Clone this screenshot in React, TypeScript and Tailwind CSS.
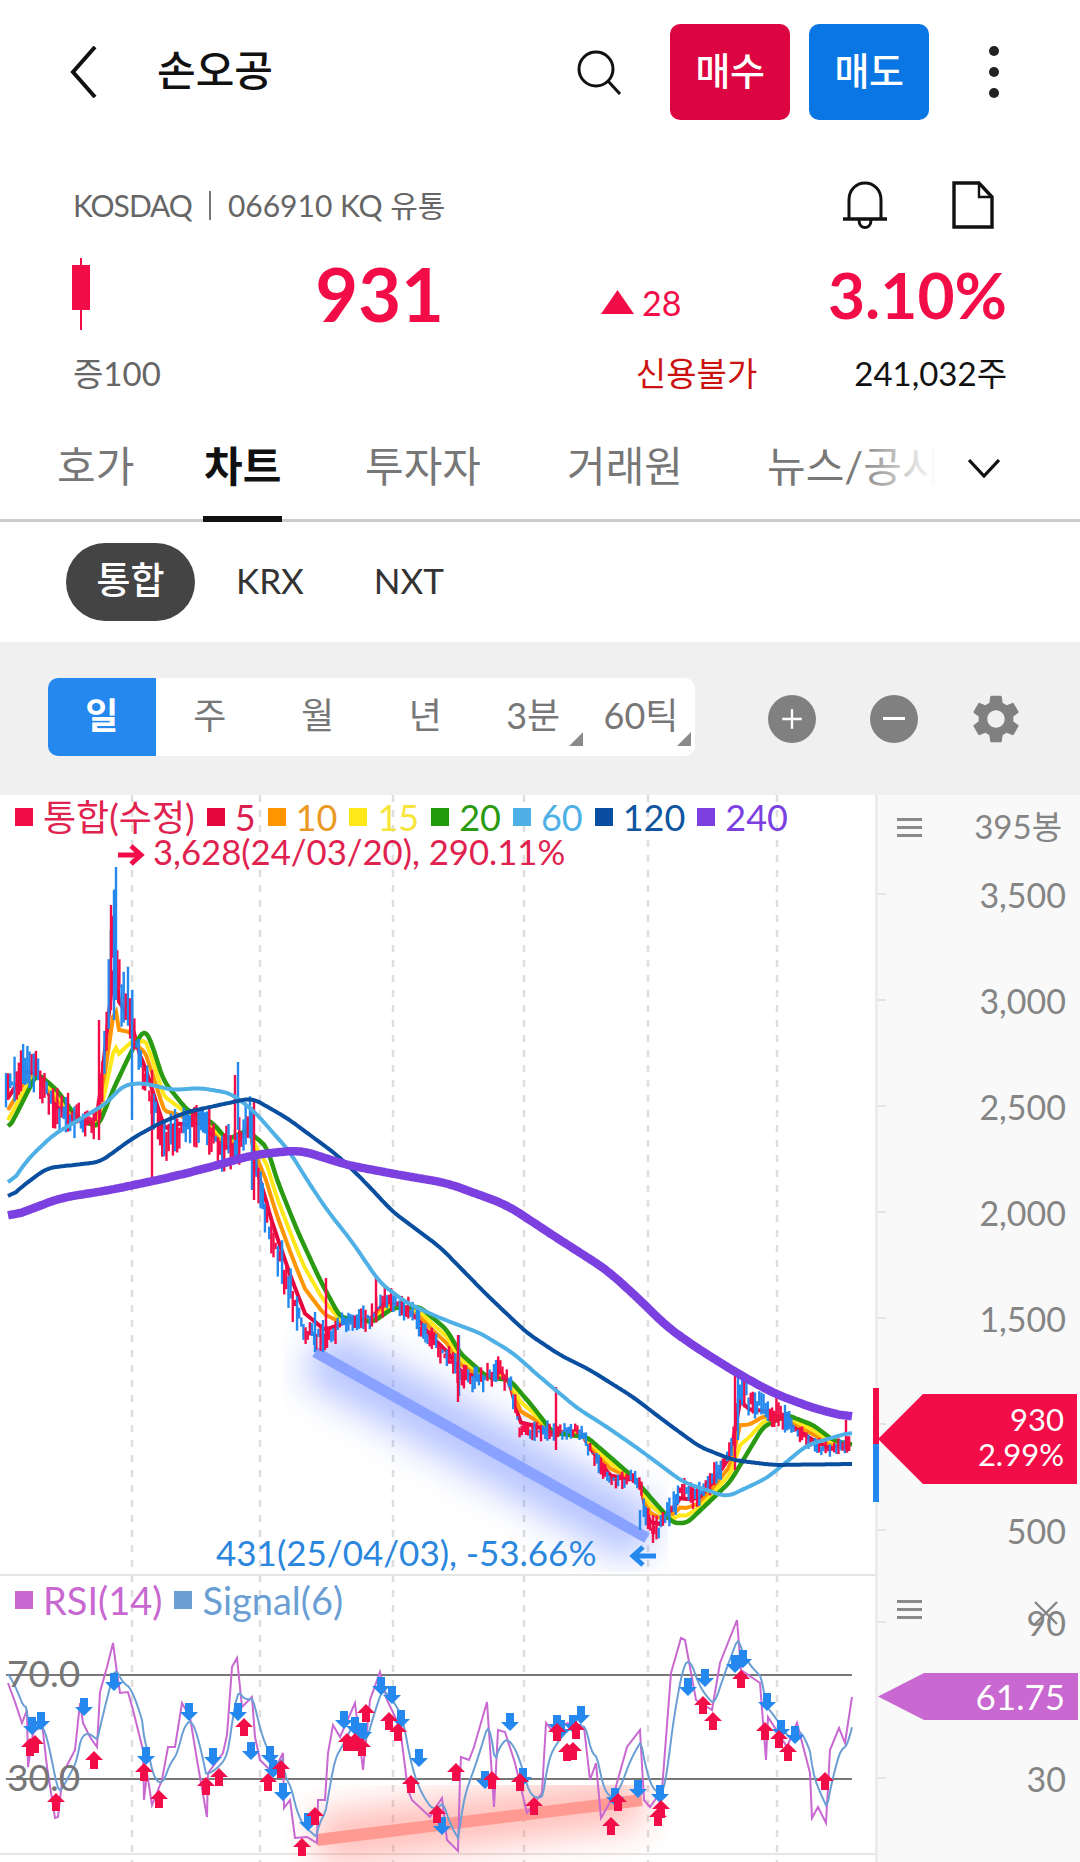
import { MdSettings } from 'react-icons/md'

type Pt = [number, number]

const RED = '#f20d48'
const BLUE = '#2488ee'

function interp(pts: Pt[], x: number) {
  if (x <= pts[0][0]) return pts[0][1]
  for (let i = 1; i < pts.length; i++) {
    if (x <= pts[i][0]) {
      const [x0, y0] = pts[i - 1]
      const [x1, y1] = pts[i]
      return y0 + ((y1 - y0) * (x - x0)) / (x1 - x0)
    }
  }
  return pts[pts.length - 1][1]
}

const toPath = (pts: Pt[]) => pts.map((p) => `${p[0].toFixed(1)},${p[1].toFixed(1)}`).join(' ')

const rand = (i: number) => {
  const v = Math.sin(i * 127.1 + 11.7) * 43758.5453
  return v - Math.floor(v)
}

// rounds off the corners of the hand-read curves
const smooth = (pts: Pt[], win = 8): Pt[] => {
  const out: Pt[] = []
  const start = pts[0][0]
  const end = pts[pts.length - 1][0]
  for (let x = start; x <= end; x += 2) {
    let sum = 0
    let n = 0
    for (let d = -win; d <= win; d += 2) {
      if (x + d < start || x + d > end) continue
      sum += interp(pts, x + d)
      n++
    }
    out.push([x, sum / n])
  }
  return out
}

const ma240: Pt[] = [[8, 1218], [60, 1198], [110, 1190], [167, 1178], [207, 1168], [253, 1155], [300, 1150], [347, 1165], [400, 1175], [447, 1183], [507, 1205], [557, 1238], [607, 1270], [640, 1300], [667, 1327], [700, 1350], [737, 1373], [773, 1393], [813, 1408], [852, 1418]]
const ma120: Pt[] = [[8, 1200], [20, 1188], [47, 1168], [100, 1162], [133, 1138], [160, 1123], [187, 1112], [233, 1102], [252, 1098], [287, 1118], [337, 1155], [363, 1180], [393, 1212], [440, 1247], [487, 1295], [527, 1333], [560, 1355], [590, 1370], [633, 1397], [667, 1423], [700, 1447], [733, 1460], [773, 1465], [852, 1464]]
const ma60: Pt[] = [[8, 1188], [27, 1160], [53, 1135], [87, 1115], [107, 1103], [123, 1085], [143, 1083], [173, 1090], [200, 1088], [230, 1093], [253, 1110], [290, 1152], [307, 1180], [327, 1210], [353, 1243], [380, 1283], [407, 1303], [440, 1318], [480, 1333], [513, 1353], [540, 1377], [577, 1408], [607, 1427], [640, 1450], [683, 1482], [727, 1497], [767, 1478], [807, 1445], [852, 1432]]
const ma20: Pt[] = [[8, 1130], [20, 1107], [37, 1073], [57, 1090], [77, 1118], [98, 1127], [113, 1090], [132, 1050], [145, 1028], [153, 1047], [163, 1080], [187, 1110], [213, 1123], [227, 1140], [247, 1130], [267, 1147], [277, 1180], [297, 1230], [320, 1280], [340, 1317], [373, 1322], [393, 1308], [420, 1307], [447, 1330], [460, 1353], [487, 1377], [510, 1380], [533, 1407], [553, 1433], [587, 1437], [610, 1457], [633, 1477], [650, 1497], [673, 1523], [687, 1523], [730, 1482], [763, 1427], [787, 1415], [813, 1425], [833, 1440], [852, 1445]]
const closes: Pt[] = [[8, 1090], [25, 1065], [40, 1078], [55, 1110], [75, 1120], [95, 1125], [100, 1090], [110, 980], [115, 920], [118, 980], [130, 1010], [140, 1060], [155, 1110], [165, 1140], [178, 1130], [200, 1125], [225, 1150], [240, 1140], [250, 1120], [255, 1170], [270, 1230], [290, 1290], [305, 1330], [325, 1340], [345, 1322], [370, 1318], [385, 1300], [410, 1310], [430, 1340], [450, 1360], [460, 1375], [480, 1380], [500, 1370], [510, 1385], [520, 1430], [535, 1430], [555, 1432], [580, 1430], [590, 1450], [610, 1480], [640, 1480], [645, 1510], [650, 1528], [660, 1528], [668, 1515], [680, 1492], [700, 1495], [713, 1478], [730, 1450], [735, 1420], [740, 1385], [750, 1400], [770, 1410], [790, 1425], [810, 1442], [827, 1450], [852, 1443]]

const blend = (t: number): Pt[] => {
  const out: Pt[] = []
  for (let x = 8; x <= 852; x += 3) {
    const c = interp(closes, x)
    out.push([x, c + (interp(ma20, x) - c) * t])
  }
  return out
}

const ampAt = (x: number) => {
  if (x < 100) return 24
  if (x < 135) return 40
  if (x < 300) return 26
  if (x < 520) return 15
  if (x < 640) return 11
  if (x < 730) return 15
  if (x < 790) return 18
  return 9
}

const candles = Array.from({ length: 395 }, (_, i) => {
  const x = 6 + i * 2.14
  const y = interp(closes, x)
  const a = ampAt(x)
  return { x, y1: y - a * rand(i), y2: y + a * rand(i + 500), red: rand(i + 900) > 0.55 }
})

const wicks: [number, number, number, string][] = [
  [111, 905, 1010, RED], [116, 867, 1000, BLUE], [114, 890, 1020, BLUE], [99, 1020, 1140, RED], [132, 1000, 1120, BLUE],
  [152, 1070, 1185, RED], [238, 1062, 1130, BLUE], [235, 1075, 1140, RED], [252, 1107, 1190, BLUE], [254, 1100, 1200, RED],
  [315, 1312, 1352, BLUE], [323, 1320, 1352, BLUE], [326, 1278, 1345, RED], [376, 1278, 1320, RED], [459, 1335, 1396, BLUE], [458, 1335, 1402, RED],
  [556, 1387, 1450, RED], [640, 1510, 1530, BLUE], [653, 1515, 1543, RED], [738, 1370, 1440, BLUE], [735, 1375, 1470, RED], [846, 1420, 1450, RED],
]

const rsi: Pt[] = [[8, 1683], [15, 1702], [22, 1723], [27, 1710], [28, 1767], [33, 1733], [42, 1723], [47, 1767], [55, 1818], [58, 1817], [63, 1773], [75, 1750], [80, 1703], [83, 1723], [90, 1737], [97, 1747], [100, 1692], [107, 1667], [113, 1643], [117, 1673], [120, 1693], [128, 1692], [133, 1710], [143, 1750], [144, 1800], [147, 1773], [152, 1805], [162, 1780], [168, 1747], [175, 1747], [182, 1703], [190, 1717], [197, 1760], [207, 1817], [208, 1773], [223, 1753], [227, 1735], [232, 1667], [237, 1658], [242, 1707], [252, 1697], [255, 1737], [260, 1760], [273, 1773], [283, 1753], [284, 1808], [290, 1800], [295, 1838], [307, 1837], [317, 1843], [318, 1800], [325, 1800], [328, 1753], [333, 1725], [340, 1737], [355, 1703], [363, 1770], [370, 1700], [380, 1672], [387, 1700], [400, 1727], [408, 1790], [412, 1800], [430, 1817], [436, 1807], [442, 1798], [447, 1840], [458, 1851], [460, 1777], [461, 1757], [469, 1760], [474, 1747], [487, 1702], [494, 1807], [498, 1730], [505, 1732], [515, 1763], [527, 1813], [542, 1793], [546, 1723], [554, 1733], [567, 1723], [584, 1727], [590, 1780], [596, 1763], [601, 1818], [613, 1797], [627, 1747], [640, 1730], [644, 1800], [650, 1807], [662, 1790], [671, 1673], [681, 1638], [685, 1640], [696, 1700], [712, 1710], [720, 1663], [737, 1620], [741, 1670], [760, 1683], [766, 1760], [768, 1717], [787, 1747], [797, 1723], [810, 1773], [812, 1818], [818, 1807], [826, 1823], [830, 1750], [839, 1728], [845, 1743], [852, 1697]]

const signal: Pt[] = (() => {
  const out: Pt[] = []
  let v = 1672
  for (let x = 8; x <= 852; x += 2) {
    v += (interp(rsi, x) - v) * 0.2
    out.push([x, v])
  }
  return out
})()

const ups: Pt[] = [[30, 1738], [35, 1735], [56, 1793], [94, 1751], [144, 1763], [159, 1790], [206, 1777], [219, 1768], [244, 1718], [268, 1773], [281, 1760], [302, 1838], [315, 1807], [347, 1733], [355, 1733], [362, 1738], [366, 1704], [389, 1712], [398, 1723], [411, 1775], [437, 1805], [456, 1763], [492, 1771], [520, 1773], [534, 1797], [557, 1723], [567, 1743], [573, 1742], [576, 1721], [611, 1817], [618, 1793], [658, 1808], [661, 1800], [703, 1696], [713, 1712], [741, 1670], [765, 1722], [779, 1730], [788, 1743], [825, 1772]]
const downs: Pt[] = [[32, 1717], [41, 1712], [84, 1698], [114, 1673], [146, 1747], [189, 1703], [213, 1748], [238, 1703], [251, 1742], [270, 1746], [273, 1760], [283, 1783], [308, 1813], [344, 1711], [355, 1717], [363, 1723], [381, 1677], [392, 1686], [401, 1710], [419, 1749], [442, 1817], [485, 1771], [510, 1713], [523, 1768], [557, 1715], [561, 1720], [573, 1715], [581, 1706], [615, 1788], [638, 1780], [660, 1785], [688, 1678], [705, 1669], [735, 1655], [743, 1650], [767, 1693], [781, 1720], [795, 1726]]

const gridX = [132, 260, 393, 524, 648, 777]

function ChartCanvas() {
  return (
    <svg viewBox="0 795 875 1067" className="block w-[875px] h-[1067px]">
      <defs>
        <filter id="soft" x="-30%" y="-60%" width="160%" height="220%">
          <feGaussianBlur stdDeviation="18" />
        </filter>
        <clipPath id="blueClip"><rect x="283" y="1320" width="385" height="252" /></clipPath>
        <clipPath id="redClip"><rect x="285" y="1785" width="384" height="77" /></clipPath>
      </defs>

      {gridX.map((x) => (
        <line key={x} x1={x} x2={x} y1={795} y2={1862} stroke="#dedede" strokeWidth="2.5" strokeDasharray="7 8" />
      ))}

      <g clipPath="url(#blueClip)">
        <line x1={315} y1={1352} x2={647} y2={1538} stroke="#5f7dff" strokeWidth="60" opacity="0.45" filter="url(#soft)" />
      </g>
      <line x1={315} y1={1352} x2={647} y2={1538} stroke="#8aa2ff" strokeWidth="11" />

      <polyline points={toPath(blend(0.2))} fill="none" stroke="#e5063e" strokeWidth="4" />
      <polyline points={toPath(blend(0.5))} fill="none" stroke="#ff9500" strokeWidth="4" />
      <polyline points={toPath(blend(0.75))} fill="none" stroke="#ffe81a" strokeWidth="4" />
      <polyline points={toPath(smooth(ma20, 4))} fill="none" stroke="#2a9a10" strokeWidth="4.5" strokeLinejoin="round" />
      {candles.map((c, i) => (
        <line key={i} x1={c.x} x2={c.x} y1={c.y1} y2={c.y2} stroke={c.red ? RED : BLUE} strokeWidth="2.4" />
      ))}
      {wicks.map(([x, a, b, col], i) => (
        <line key={i} x1={x} x2={x} y1={a} y2={b} stroke={col} strokeWidth="2.4" />
      ))}
      <polyline points={toPath(smooth(ma60))} fill="none" stroke="#4fb0e5" strokeWidth="4" strokeLinejoin="round" />
      <polyline points={toPath(smooth(ma120))} fill="none" stroke="#0a4ea0" strokeWidth="4" strokeLinejoin="round" />
      <polyline points={toPath(smooth(ma240, 14))} fill="none" stroke="#7c3fe0" strokeWidth="8.5" strokeLinejoin="round" />

      <path d="M118 855h22M131 846l10 9-10 9" fill="none" stroke={RED} strokeWidth="5" />
      <path d="M656 1556h-22M643 1547l-10 9 10 9" fill="none" stroke={BLUE} strokeWidth="5" />

      <line x1={0} x2={875} y1={1575} y2={1575} stroke="#e5e5e5" strokeWidth="2" />
      <line x1={0} x2={875} y1={1854} y2={1854} stroke="#e5e5e5" strokeWidth="2" />

      <g clipPath="url(#redClip)">
        <line x1={317} y1={1840} x2={642} y2={1800} stroke="#ff6a5e" strokeWidth="50" opacity="0.45" filter="url(#soft)" />
      </g>
      <line x1={317} y1={1840} x2={642} y2={1800} stroke="#ff9a92" strokeWidth="12" />

      <line x1={6} x2={852} y1={1675} y2={1675} stroke="#777" strokeWidth="2" />
      <line x1={6} x2={852} y1={1779} y2={1779} stroke="#777" strokeWidth="2" />

      <polyline points={toPath(rsi)} fill="none" stroke="#c868d0" strokeWidth="2" />
      <polyline points={toPath(signal)} fill="none" stroke="#6b9fd4" strokeWidth="2" />

      {downs.map(([x, y], i) => (
        <path key={i} d={`M${x - 4} ${y}h8v9h5l-9 9-9-9h5z`} fill={BLUE} />
      ))}
      {ups.map(([x, y], i) => (
        <path key={i} d={`M${x} ${y}l9 9h-5v9h-8v-9h-5z`} fill={RED} />
      ))}
    </svg>
  )
}

const legend = [
  { sq: '#f20d48', label: '통합(수정)', text: 'text-[#e0224f]' },
  { sq: '#e5063e', label: '5', text: 'text-[#d92050]' },
  { sq: '#ff9500', label: '10', text: 'text-[#ea9a24]' },
  { sq: '#ffe81a', label: '15', text: 'text-[#f7e53c]' },
  { sq: '#229a0e', label: '20', text: 'text-[#2a9a10]' },
  { sq: '#4fb0e5', label: '60', text: 'text-[#4fb0e5]' },
  { sq: '#0a4ea0', label: '120', text: 'text-[#0f559f]' },
  { sq: '#7c3fe0', label: '240', text: 'text-[#7c3fe0]' },
]

const Burger = () => (
  <div className="flex flex-col gap-[5px] w-[25px]">
    <span className="h-[3px] bg-[#8a8a8a]" />
    <span className="h-[3px] bg-[#8a8a8a]" />
    <span className="h-[3px] bg-[#8a8a8a]" />
  </div>
)

const AxisRow = ({ label, h }: { label: string; h: string }) => (
  <div className={`flex items-center justify-between pr-[14px] ${h}`}>
    <span className="w-[8px] h-[2px] bg-[#e4e4e4]" />
    <span className="text-[34px] text-[#858585]">{label}</span>
  </div>
)

export default function App() {
  return (
    <div className="relative w-[1080px] h-[1862px] overflow-hidden bg-white [font-family:Lato,'Noto_Sans_CJK_KR',sans-serif]">
      {/* Top bar */}
      <div className="flex items-center h-[144px] pl-[70px]">
        <svg viewBox="0 0 27 52" className="w-[27px] h-[52px]" fill="none" stroke="#111" strokeWidth="4">
          <path d="M25 1L3 26l22 25" />
        </svg>
        <span className="ml-[60px] w-[419px] text-[42px] font-medium text-[#111] -mt-[3px]">손오공</span>
        <svg viewBox="0 0 46 46" className="w-[46px] h-[46px]" fill="none" stroke="#111" strokeWidth="3">
          <circle cx="20" cy="20" r="17" />
          <path d="M32 32l12 13" />
        </svg>
        <button className="ml-[48px] w-[120px] h-[96px] rounded-[10px] bg-[#dc0541] text-white text-[38px] font-medium -tracking-[0.5px] pb-[4px]">매수</button>
        <button className="ml-[19px] w-[120px] h-[96px] rounded-[10px] bg-[#0a76e3] text-white text-[38px] font-medium -tracking-[0.5px] pb-[4px]">매도</button>
        <div className="ml-[60px] flex flex-col gap-[11px]">
          <span className="w-[10px] h-[10px] rounded-full bg-[#222]" />
          <span className="w-[10px] h-[10px] rounded-full bg-[#222]" />
          <span className="w-[10px] h-[10px] rounded-full bg-[#222]" />
        </div>
      </div>

      {/* Stock info */}
      <div className="mt-[31px] flex items-center h-[60px] pl-[73px] pr-[86px]">
        <span className="text-[30px] text-[#666] -tracking-[1px]">KOSDAQ</span>
        <span className="mx-[17px] w-[2px] h-[29px] bg-[#777]" />
        <span className="text-[30px] text-[#666]">066910 KQ 유통</span>
        <svg viewBox="0 0 46 48" className="ml-auto w-[46px] h-[48px]" fill="none" stroke="#111" strokeWidth="3">
          <path d="M7 38V19C7 9 14 2 23 2s16 7 16 17v19" />
          <path d="M1 38h44" strokeWidth="3.4" />
          <path d="M17 39c0 10 12 10 12 0" />
        </svg>
        <svg viewBox="0 0 42 48" className="ml-[64px] w-[42px] h-[48px]" fill="none" stroke="#111" strokeWidth="3.4">
          <path d="M2 2h25l13 14v30H2z" />
          <path d="M27 2v14h13" strokeWidth="2.4" />
        </svg>
      </div>

      <div className="flex items-center h-[110px] pl-[72px] pr-[73px]">
        <div className="flex items-center justify-between w-[372px] mt-[8px]">
          <div className="relative w-[18px] h-[72px] -mt-[1px]">
            <span className="absolute left-[8px] top-0 w-[2px] h-[72px] bg-[#f20d48]" />
            <span className="absolute left-0 top-[7px] w-[18px] h-[45px] bg-[#f20d48]" />
          </div>
          <span className="text-[74px] leading-none font-bold text-[#f20d48]">931</span>
        </div>
        <div className="ml-[157px] flex items-center gap-[8px] mt-[24px]">
          <span className="w-[33px] h-[24px] bg-[#f20d48] [clip-path:polygon(50%_0,100%_100%,0_100%)]" />
          <span className="text-[34px] text-[#f20d48]">28</span>
        </div>
        <span className="ml-auto text-[64px] leading-none font-bold text-[#f20d48] mt-[10px]">3.10%</span>
      </div>

      <div className="flex items-center h-[60px] pl-[73px] pr-[73px] pb-[2px] text-[33px]">
        <span className="text-[#666]">증100</span>
        <span className="ml-auto text-[#cc1111]">신용불가</span>
        <span className="ml-[97px] text-[#111]">241,032주</span>
      </div>

      {/* Tabs */}
      <div className="relative flex items-center h-[117px] pt-[8px] border-b-[3px] border-[#cccccc] pl-[57px] text-[42px] text-[#777]">
        <span className="w-[78px]">호가</span>
        <span className="ml-[69px] w-[78px] font-bold text-[#111]">차트</span>
        <span className="ml-[83px] w-[118px]">투자자</span>
        <span className="ml-[84px] w-[116px]">거래원</span>
        <span className="ml-[84px] whitespace-nowrap">뉴스/공시</span>
        <span className="absolute left-[850px] top-0 w-[86px] h-[110px] bg-gradient-to-r from-white/0 to-white" />
        <span className="absolute left-[936px] top-0 w-[30px] h-[110px] bg-white" />
        <svg viewBox="0 0 32 19" className="absolute left-[968px] top-[54px] w-[32px] h-[19px]" fill="none" stroke="#111" strokeWidth="3.2">
          <path d="M1 1l15 16L31 1" />
        </svg>
        <span className="absolute left-[203px] -bottom-[3px] w-[79px] h-[6px] bg-[#111]" />
      </div>

      {/* Market pills */}
      <div className="flex items-center h-[120px] pl-[66px] text-[35px] text-[#333]">
        <span className="flex items-center justify-center w-[129px] h-[78px] rounded-[39px] bg-[#444] text-white text-[37px] font-medium pb-[5px]">통합</span>
        <span className="ml-[41px] pb-[4px]">KRX</span>
        <span className="ml-[70px] pb-[4px]">NXT</span>
      </div>

      {/* Period toolbar */}
      <div className="flex items-center h-[153px] pl-[48px] bg-[#f0f0f0]">
        <div className="flex w-[647px] h-[78px] rounded-[10px] bg-white text-[36px] text-[#777] overflow-hidden mb-[3px]">
          <span className="flex items-center justify-center w-[108px] bg-[#2488ee] text-white font-bold pb-[4px]">일</span>
          {['주', '월', '년', '3분', '60틱'].map((t, i) => (
            <span key={t} className="relative flex items-center justify-center w-[108px] pb-[4px]">
              {t}
              {i > 2 && (
                <span className="absolute right-[4px] bottom-[10px] w-[14px] h-[14px] bg-[#8a8a8a] [clip-path:polygon(100%_0,100%_100%,0_100%)]" />
              )}
            </span>
          ))}
        </div>
        <span className="ml-[73px] flex items-center justify-center w-[48px] h-[48px] rounded-full bg-[#808080]">
          <svg viewBox="0 0 24 24" className="w-[26px] h-[26px]" stroke="#fff" strokeWidth="2.2"><path d="M12 3v18M3 12h18" /></svg>
        </span>
        <span className="ml-[54px] flex items-center justify-center w-[48px] h-[48px] rounded-full bg-[#808080]">
          <span className="w-[22px] h-[3px] bg-white" />
        </span>
        <MdSettings size={58} className="ml-[49px] text-[#808080]" />
      </div>

      {/* Chart */}
      <div className="relative flex h-[1067px]">
        <div className="w-[875px] shrink-0">
          <ChartCanvas />
        </div>
        <div className="flex-1 bg-[#f9f9f9] border-l-[3px] border-[#ececec]">
          <div className="flex items-center justify-between h-[46px] pl-[19px] pr-[18px] pt-[18px] text-[33px] text-[#858585]">
            <Burger />
            <span>395봉</span>
          </div>
          <AxisRow label="3,500" h="h-[106px]" />
          <AxisRow label="3,000" h="h-[106px]" />
          <AxisRow label="2,500" h="h-[106px]" />
          <AxisRow label="2,000" h="h-[106px]" />
          <AxisRow label="1,500" h="h-[106px]" />
          <AxisRow label="1,000" h="h-[106px]" />
          <AxisRow label="500" h="h-[106px]" />
          <div className="relative">
            <AxisRow label="90" h="h-[78px]" />
            <div className="absolute left-[19px] top-[17px]">
              <Burger />
            </div>
            <svg viewBox="0 0 26 26" className="absolute left-[155px] top-[17px] w-[26px] h-[26px]" stroke="#858585" strokeWidth="2.4"><path d="M2 2l22 22M24 2L2 24" /></svg>
          </div>
          <div className="h-[78px]" />
          <AxisRow label="30" h="h-[78px]" />
        </div>

        {/* Legend, over the chart */}
        <div className="absolute left-[15px] -top-[1px] flex items-center h-[46px] text-[36px] whitespace-nowrap">
          {legend.map((l) => (
            <span key={l.label} className={`flex items-center gap-[10px] mr-[12px] ${l.text}`}>
              <svg viewBox="0 0 18 18" className="w-[18px] h-[18px]"><rect width="18" height="18" fill={l.sq} /></svg>
              {l.label}
            </span>
          ))}
        </div>
        <span className="absolute left-[153px] top-[35px] text-[34.7px] leading-[44px] text-[#e0224f] whitespace-nowrap">3,628(24/03/20), 290.11%</span>
        <span className="absolute left-[216px] top-[735px] text-[35px] leading-[44px] text-[#2b86de] whitespace-nowrap">431(25/04/03), -53.66%</span>

        <div className="absolute left-0 top-[783px] flex items-center gap-[10px] pl-[15px] h-[44px] text-[38px] whitespace-nowrap">
          <span className="flex items-center gap-[10px] text-[#c868d0]">
            <span className="w-[18px] h-[18px] bg-[#c868d0]" />RSI(14)
          </span>
          <span className="ml-[2px] flex items-center gap-[10px] text-[#6b9fd4]">
            <span className="w-[18px] h-[18px] bg-[#6b9fd4]" />Signal(6)
          </span>
        </div>
        <span className="absolute left-[7px] top-[854px] text-[37px] leading-[48px] text-[#777]">70.0</span>
        <span className="absolute left-[7px] top-[958px] text-[37px] leading-[48px] text-[#777]">30.0</span>

        {/* Current price tags */}
        <span className="absolute left-[873px] top-[593px] w-[6px] h-[56px] bg-[#f20d48]" />
        <span className="absolute left-[873px] top-[649px] w-[6px] h-[58px] bg-[#2488ee]" />
        <div className="absolute left-[878px] top-[599px] flex flex-col items-end justify-center w-[199px] h-[90px] pr-[13px] pb-[4px] bg-[#f20d48] text-white text-[31px] leading-[35px] [clip-path:polygon(0_50%,45px_0,100%_0,100%_100%,45px_100%)]">
          <span>930</span>
          <span>2.99%</span>
        </div>
        <div className="absolute left-[878px] top-[878px] flex items-center justify-end w-[200px] h-[47px] pr-[13px] bg-[#c868d0] text-white text-[35px] [clip-path:polygon(0_50%,46px_0,100%_0,100%_100%,46px_100%)]">
          61.75
        </div>
      </div>
    </div>
  )
}
